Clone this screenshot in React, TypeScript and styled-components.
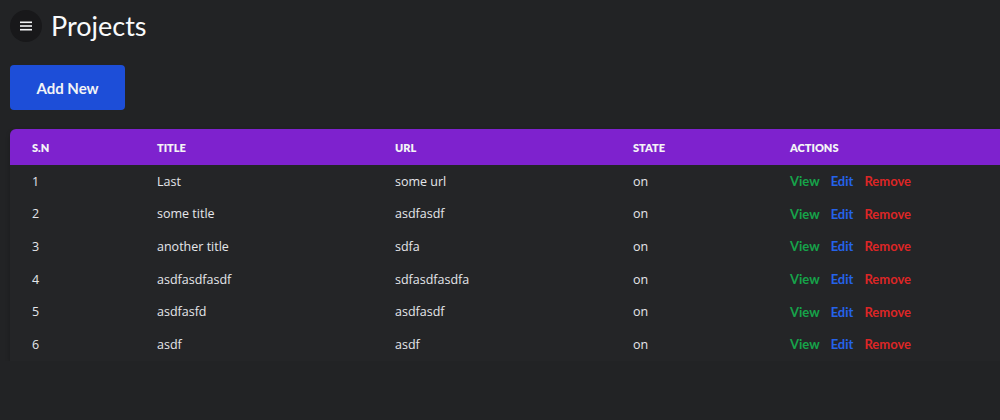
import styled, { createGlobalStyle } from 'styled-components';

const GlobalStyle = createGlobalStyle`
  html, body {
    margin: 0;
    padding: 0;
    background: #222325;
    overflow: hidden;
  }
  body {
    font-family: 'Lato', 'Noto Sans', sans-serif;
    color: #f3f4f6;
  }
`;

type Project = { id: number; title: string; url: string; state: string };

const projects: Project[] = [
  { id: 1, title: 'Last', url: 'some url', state: 'on' },
  { id: 2, title: 'some title', url: 'asdfasdf', state: 'on' },
  { id: 3, title: 'another title', url: 'sdfa', state: 'on' },
  { id: 4, title: 'asdfasdfasdf', url: 'sdfasdfasdfa', state: 'on' },
  { id: 5, title: 'asdfasfd', url: 'asdfasdf', state: 'on' },
  { id: 6, title: 'asdf', url: 'asdf', state: 'on' },
];

const columns = ['S.N', 'Title', 'URL', 'State', 'Actions'];
const widths = [125, 238, 238, 157, 232];

export default function App() {
  return (
    <>
      <GlobalStyle />
      <Page>
        <Header>
          <MenuButton>
            <svg width="12" height="10" viewBox="0 0 12 10">
              <rect x="0" y="0.5" width="12" height="1.6" fill="#f3f4f6" />
              <rect x="0" y="4.2" width="12" height="1.6" fill="#f3f4f6" />
              <rect x="0" y="7.9" width="12" height="1.6" fill="#f3f4f6" />
            </svg>
          </MenuButton>
          <Title>Projects</Title>
        </Header>
        <AddButton>Add New</AddButton>
        <Table>
          <colgroup>
            {widths.map((w, i) => (
              <col key={i} style={{ width: w }} />
            ))}
          </colgroup>
          <thead>
            <tr>
              {columns.map(c => (
                <Th key={c}>{c}</Th>
              ))}
            </tr>
          </thead>
          <tbody>
            {projects.map(p => (
              <tr key={p.id}>
                <Td>{p.id}</Td>
                <Td>{p.title}</Td>
                <Td>{p.url}</Td>
                <Td>{p.state}</Td>
                <Td>
                  <Actions>
                    <Action color="#16a34a">View</Action>
                    <Action color="#2563eb">Edit</Action>
                    <Action color="#dc2626">Remove</Action>
                  </Actions>
                </Td>
              </tr>
            ))}
          </tbody>
        </Table>
      </Page>
    </>
  );
}

const Page = styled.div`
  padding: 9px 0 0 10px;
`;

const Header = styled.div`
  display: flex;
  align-items: center;
  gap: 9px;
`;

const MenuButton = styled.button`
  width: 32px;
  height: 32px;
  border-radius: 50%;
  border: none;
  background: #18181a;
  display: flex;
  align-items: center;
  justify-content: center;
  padding: 0;
`;

const Title = styled.h1`
  margin: 0;
  font-size: 27px;
  font-weight: 400;
  line-height: 34px;
  color: #f9fafb;
`;

const AddButton = styled.button`
  margin-top: 22px;
  width: 115px;
  height: 45px;
  background: #1d4ed8;
  border: none;
  border-radius: 4px;
  color: #f3f4f6;
  font-family: 'Lato', sans-serif;
  font-size: 15px;
  font-weight: 700;
  display: block;
`;

const Table = styled.table`
  margin-top: 19px;
  width: 990px;
  border-collapse: collapse;
  table-layout: fixed;
  box-shadow: 0 2px 4px rgba(0, 0, 0, 0.25);
  border-radius: 6px 0 0 0;
  overflow: hidden;
`;

const Th = styled.th`
  background: #7e22ce;
  height: 36px;
  padding: 0 0 0 22px;
  text-align: left;
  font-size: 11px;
  font-weight: 800;
  text-transform: uppercase;
  color: #f3f4f6;
`;

const Td = styled.td`
  height: 32.6px;
  padding: 0 0 0 22px;
  font-family: 'Open Sans', 'Noto Sans', sans-serif;
  font-size: 12.5px;
  color: #e5e7eb;
  background: #242527;
`;

const Actions = styled.div`
  display: flex;
  gap: 11px;
`;

const Action = styled.span<{ color: string }>`
  font-family: 'Lato', sans-serif;
  font-weight: 700;
  font-size: 13px;
  color: ${props => props.color};
`;
